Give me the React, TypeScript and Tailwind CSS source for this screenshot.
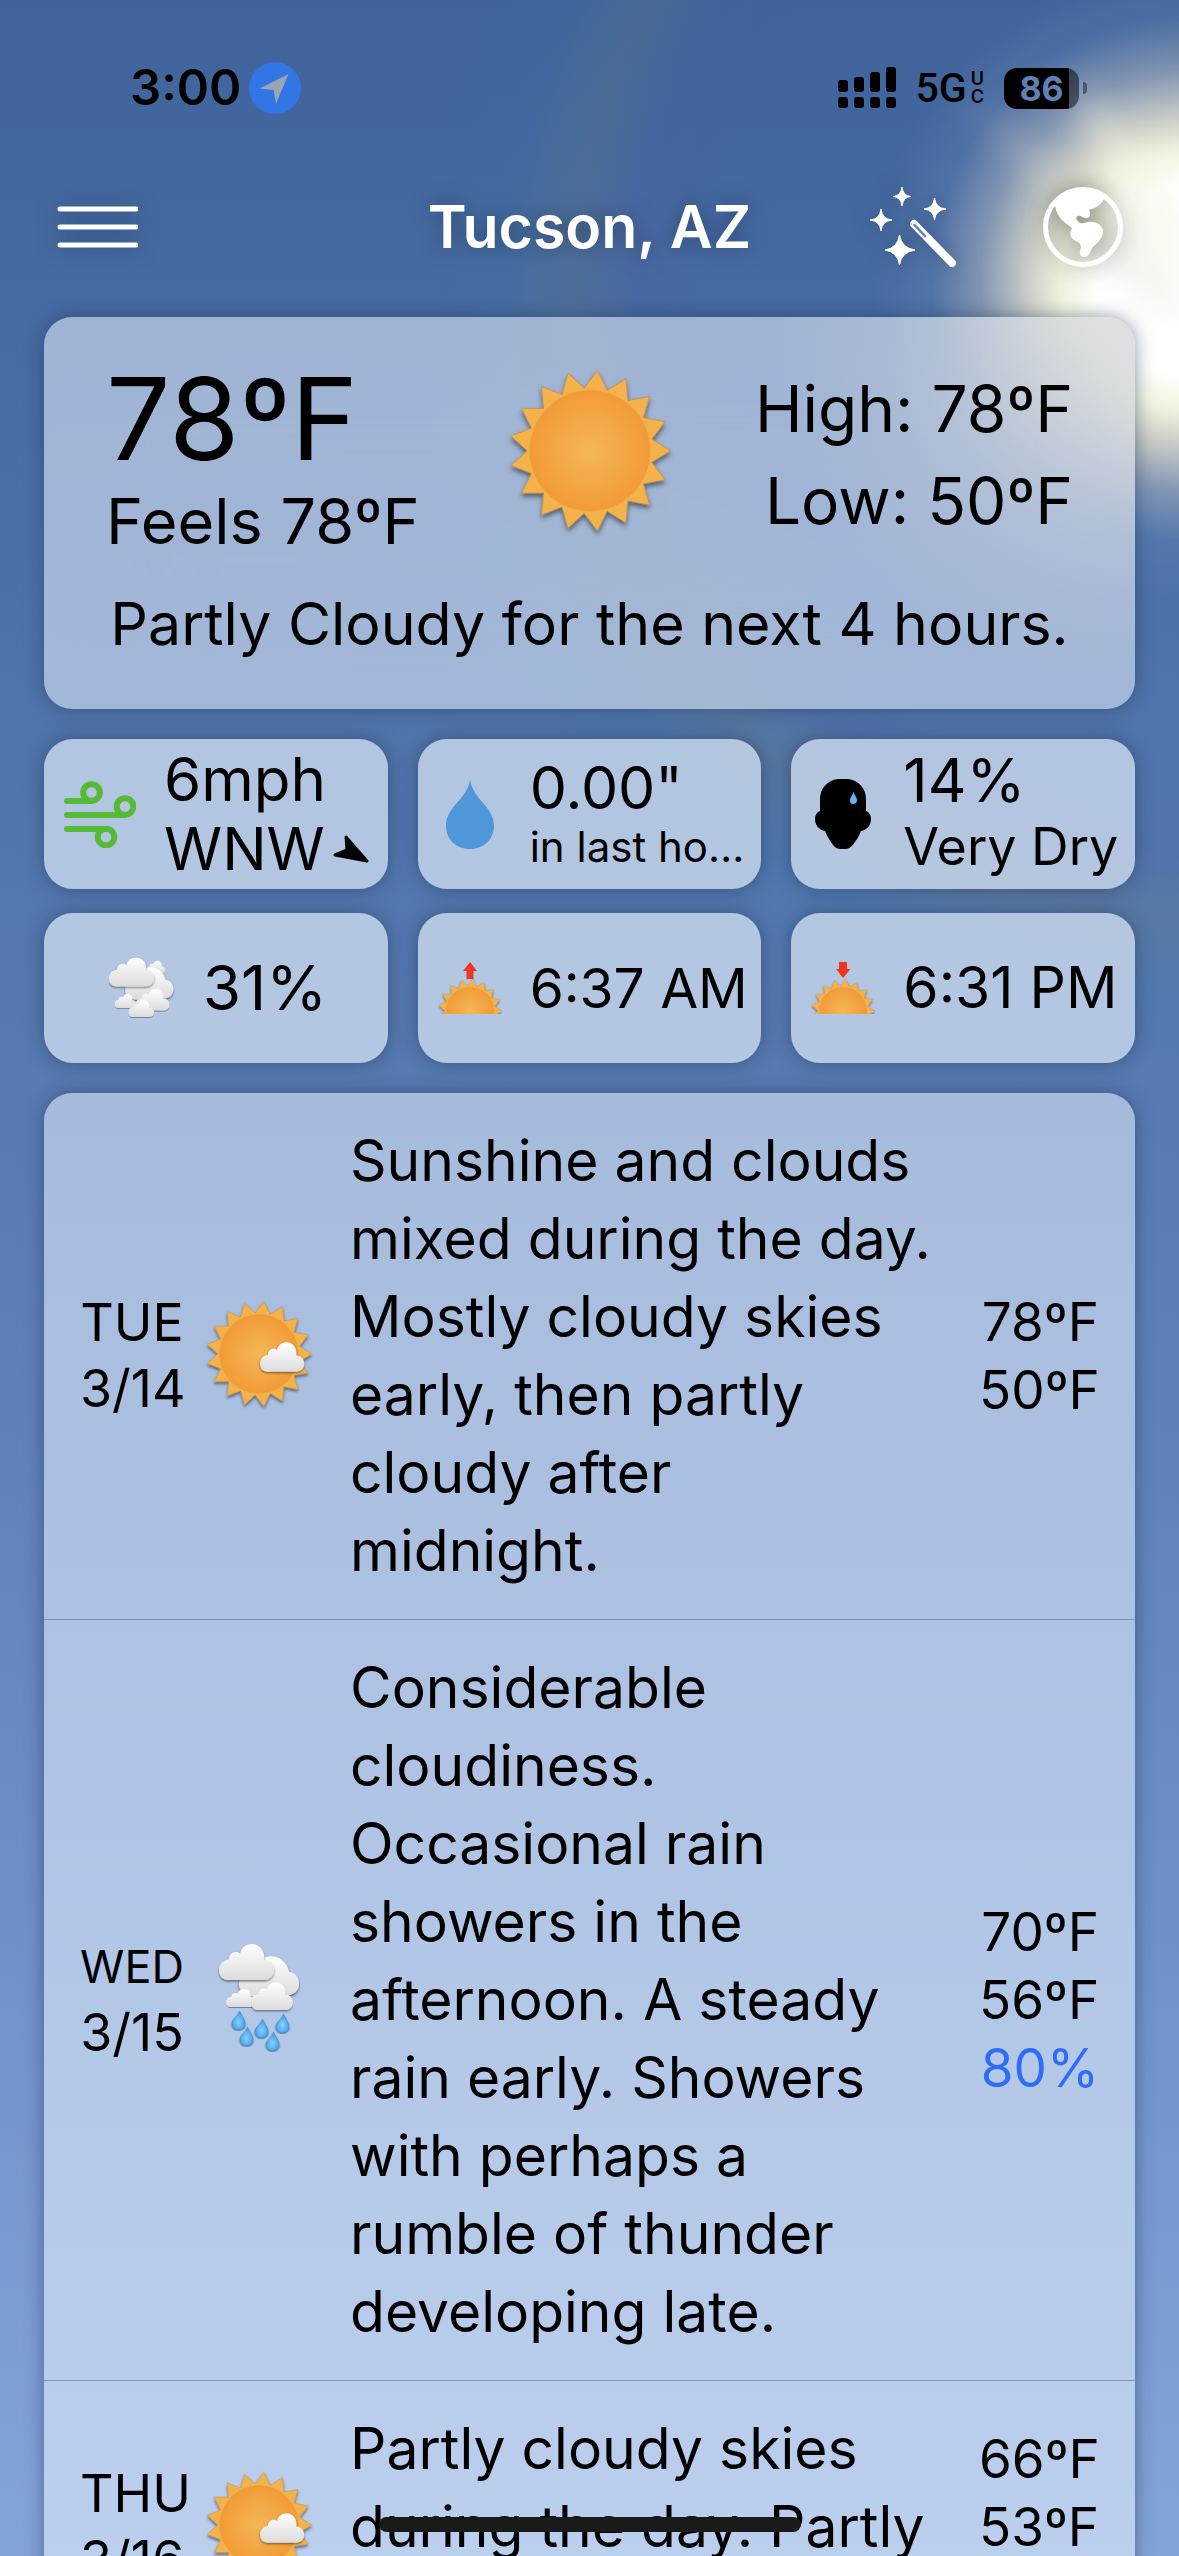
import type { ReactNode } from "react";

const RAYS = 17;

function starPoints(cx: number, cy: number, outer: number, inner: number) {
  return Array.from({ length: RAYS * 2 }, (_, i) => {
    const r = i % 2 === 0 ? outer : inner;
    const a = (Math.PI * i) / RAYS;
    return `${(cx + r * Math.cos(a)).toFixed(2)},${(cy + r * Math.sin(a)).toFixed(2)}`;
  }).join(" ");
}

const CLOUD =
  "M13 50C5 50 0 44 0 36.500C0 28 6 22 14 21.500C14 15 19 10.500 25 11C27 11 29 12 30.500 13C32 5 39 0 47 0C57 0 65 8 65 18C65 19.500 65 21 64.500 22.500C73 22 79 29 79 36.500C79 44 73 50 65 50Z";
const DROP = "M14 0C15 7 24 16 24 26C24 33 19 38 12 38C5 38 0 33 0 26C0 16 11 12 14 0Z";

function Defs() {
  return (
    <svg className="absolute w-0 h-0" aria-hidden="true">
      <defs>
        <radialGradient id="sunFill">
          <stop offset="0" stopColor="#f4b755" />
          <stop offset="1" stopColor="#f29b38" />
        </radialGradient>
        <linearGradient id="cloudFill" x1="0" y1="0" x2="0" y2="1">
          <stop offset="0" stopColor="#ffffff" />
          <stop offset="1" stopColor="#dcdcdd" />
        </linearGradient>
        <radialGradient id="dropFill" cx="0.5" cy="0.6">
          <stop offset="0" stopColor="#8fd0fb" />
          <stop offset="1" stopColor="#3fa4f0" />
        </radialGradient>
        <filter id="soft" x="-20%" y="-20%" width="140%" height="150%">
          <feDropShadow dx="0" dy="2" stdDeviation="1.5" floodOpacity="0.5" />
        </filter>
      </defs>
    </svg>
  );
}

function SunShape({ cloud = false }: { cloud?: boolean }) {
  return (
    <>
      <polygon points={starPoints(50, 50, 50, 39)} fill="#f3b24b" stroke="#b58a4a" strokeWidth="0.4" filter="url(#soft)" />
      <circle cx="50" cy="50" r="37.500" fill="url(#sunFill)" />
      {cloud && (
        <path d={CLOUD} transform="translate(51 39) scale(0.53 0.56)" fill="url(#cloudFill)" filter="url(#soft)" />
      )}
    </>
  );
}

function Sun({ className, cloud }: { className: string; cloud?: boolean }) {
  return (
    <svg viewBox="-2 -2 104 108" className={className} aria-hidden="true">
      <SunShape cloud={cloud} />
    </svg>
  );
}

function HalfSun({ down = false }: { down?: boolean }) {
  return (
    <svg viewBox="0 0 64 52" className="w-16 h-[52px] shrink-0" aria-hidden="true">
      <g transform="translate(0 17) scale(0.64)">
        <SunShape />
      </g>
      <path
        d={down ? "M28 0H36V7H39.500L32 16L25 7H28Z" : "M32 0L39 9H35.500V17H28.500V9H25Z"}
        fill="#ee3524"
      />
    </svg>
  );
}

function Cloud({ x, y, w, h }: { x: number; y: number; w: number; h: number }) {
  return (
    <g transform={`translate(${x} ${y}) scale(${w / 79} ${h / 50})`}>
      <path d={CLOUD} fill="url(#cloudFill)" filter="url(#soft)" />
    </g>
  );
}

function BigCloud() {
  return (
    <path
      d="M47 13C56 10 68 16 70 28C76 28 80 33 80 40C80 47 74 52 66 51C62 51 60 49 58 47L38 52C30 54 22 49 20 42C19 30 30 18 47 13Z"
      fill="url(#cloudFill)"
      filter="url(#soft)"
    />
  );
}

function CloudsIcon() {
  return (
    <svg viewBox="0 0 82 76" className="w-[66px] h-[62px] shrink-0" aria-hidden="true">
      <Cloud x={46} y={4} w={24} h={16} />
      <BigCloud />
      <Cloud x={7} y={45} w={27} h={18} />
      <Cloud x={33} y={39} w={42} h={27} />
      <Cloud x={0} y={0} w={56} h={36} />
      <Cloud x={24} y={53} w={32} h={21} />
    </svg>
  );
}

function RainIcon() {
  const drops = [
    [13, 67],
    [36, 75],
    [57, 70],
    [21, 83],
    [47, 88],
  ];
  return (
    <svg viewBox="-2 0 84 112" className="w-[84px] h-28" aria-hidden="true">
      <BigCloud />
      <Cloud x={7} y={45} w={30} h={18} />
      <Cloud x={32} y={38} w={42} h={28} />
      <Cloud x={0} y={0} w={55} h={36} />
      {drops.map(([x, y]) => (
        <g key={`${x}-${y}`} transform={`translate(${x} ${y}) scale(0.54 0.49)`}>
          <path d={DROP} fill="url(#dropFill)" stroke="#2f86c8" strokeWidth="1" filter="url(#soft)" />
        </g>
      ))}
    </svg>
  );
}

function WindIcon() {
  return (
    <svg viewBox="0 0 72 67" className="mx-5 w-[72px] h-[67px] shrink-0" fill="none" stroke="#55bb37" strokeWidth="6" strokeLinecap="round" aria-hidden="true">
      <path d="M3 20H27" />
      <path d="M3 34H61" />
      <path d="M3 48H42" />
      <circle cx="27.500" cy="11.500" r="8.300" />
      <circle cx="61" cy="25.500" r="8.300" />
      <circle cx="42" cy="56" r="8.300" />
    </svg>
  );
}

function RainDropIcon() {
  return (
    <svg viewBox="0 0 48 70" className="w-12 h-[70px] shrink-0" aria-hidden="true">
      <path d="M24 0C26 20 48 27 48 47C48 60 38 70 24 70C10 70 0 60 0 47C0 27 22 20 24 0Z" fill="#4f97d8" />
    </svg>
  );
}

function HumidityIcon() {
  return (
    <svg viewBox="0 0 56 70" className="w-14 h-[70px] shrink-0" aria-hidden="true">
      <path d="M23 0H33C44 1 51 10 51 20V32C54 33 56 36 56 40C56 46 52 51 46 52C44 58 40 63 37 67C34 70 31 70 28 70C24 70 21 70 18 66C15 62 12 57 10 52C4 51 0 46 0 40C0 36 2 33 5 32V20C5 10 12 1 23 0Z" />
      <path d="M38.500 12C39 16 42 18 42 21C42 24 40 25 38.500 25C36 25 35 24 35 21C35 18 38 16 38.500 12Z" fill="#62b5f5" />
    </svg>
  );
}

function Arrow() {
  return (
    <svg viewBox="0 0 36 28" className="w-9 h-7 shrink-0" aria-label="wind direction">
      <path d="M13 2L34 26L2 20L14 15Z" stroke="#000" strokeWidth="3" strokeLinejoin="round" />
    </svg>
  );
}

function Sky() {
  return (
    <>
      <div className="absolute inset-0 bg-[radial-gradient(circle_at_101%_300px,transparent_490px,rgba(90,90,165,0.13)_550px,rgba(105,125,130,0.26)_620px,rgba(60,125,165,0.14)_690px,transparent_760px)]" />
      <div className="absolute inset-0 bg-[radial-gradient(circle_at_101%_280px,#fff_0,#fff_95px,#f1f3df_130px,rgba(222,220,205,0.85)_165px,rgba(170,178,190,0.6)_210px,rgba(110,140,185,0.28)_260px,transparent_320px)]" />
      <svg viewBox="0 0 380 380" className="absolute top-0 right-0 w-[380px] h-[380px] blur-lg" aria-hidden="true">
        <path d="M380 330L270 70L380 210Z" fill="#f4f5e2" opacity="0.6" />
        <path d="M380 330L160 90L320 230Z" fill="#dcd8cc" opacity="0.6" />
      </svg>
    </>
  );
}

function StatusBar() {
  return (
    <div className="flex items-center justify-between h-[52px] pl-[86px] pr-12">
      <div className="flex items-center gap-2">
        <span className="text-[49px] leading-[52px] font-semibold">3:00</span>
        <svg viewBox="0 0 52 52" className="w-[52px] h-[52px]" aria-hidden="true">
          <circle cx="26" cy="26" r="26" fill="#3275e4" />
          <path d="M39.500 12L27 41.500L24.500 28L10.500 26.500Z" fill="#9aa5b4" />
        </svg>
      </div>
      <div className="flex items-center">
        <svg viewBox="0 0 58 42" className="w-[58px] h-[42px]" aria-hidden="true">
          <rect x="0" y="13" width="10" height="12" rx="3" />
          <rect x="16" y="10" width="10" height="15" rx="3" />
          <rect x="32" y="5" width="10" height="20" rx="3" />
          <rect x="48" y="0" width="10" height="25" rx="3" />
          <rect x="0" y="30" width="10" height="11" rx="3" />
          <rect x="16" y="30" width="10" height="11" rx="3" />
          <rect x="32" y="30" width="10" height="11" rx="3" />
          <rect x="48" y="30" width="10" height="11" rx="3" />
        </svg>
        <span className="ml-5 font-['Roboto'] text-[41px] leading-[42px] font-medium">5G</span>
        <span className="ml-1 flex flex-col text-[18px] leading-[18px] font-semibold">
          <span>U</span>
          <span>C</span>
        </span>
        <span className="ml-5 flex w-[75px] h-[41px] items-center justify-center overflow-hidden rounded-[13px] bg-linear-to-r from-black from-87% to-black/50 to-87% text-[34px] leading-[41px] font-bold text-[#6180b4]">
          86
        </span>
        <span className="ml-1 h-3 w-1 rounded-r-full bg-black/40" />
      </div>
    </div>
  );
}

function Header() {
  return (
    <header className="mt-[73px] flex h-20 items-center justify-between px-3 text-white">
      <button aria-label="Menu" className="w-60 drop-shadow-[0_0_10px_rgba(30,50,80,0.6)]">
        <svg viewBox="0 0 82 42" className="w-[82px] h-[42px]" stroke="currentColor" strokeWidth="5" strokeLinecap="round">
          <path d="M4 3H80M4 21H80M4 39H80" />
        </svg>
      </button>
      <h1 className="text-[59px] leading-[80px] font-semibold drop-shadow-[0_0_10px_rgba(30,50,80,0.6)]">Tucson, AZ</h1>
      <div className="flex w-60 items-center justify-end">
        <button aria-label="Effects" className="drop-shadow-[0_0_10px_rgba(30,50,80,0.5)]">
          <svg viewBox="0 0 87 81" className="w-[87px] h-[81px]" fill="currentColor">
            <path d="M32 0Q33 9 41 9.500Q33 10 32 19Q31 10 23 9.500Q31 9 32 0Z" stroke="currentColor" />
            <path d="M64.500 11Q65.500 21 76 22Q65.500 23 64.500 33Q63.500 23 54 22Q63.500 21 64.500 11Z" stroke="currentColor" />
            <path d="M11 22Q12 32 22 33Q12 34 11 44Q10 34 0 33Q10 32 11 22Z" stroke="currentColor" />
            <path d="M29.500 48Q31.500 61 45 63Q31.500 65 29.500 78Q27.500 65 15 63Q27.500 61 29.500 48Z" stroke="currentColor" />
            <path d="M44 37L82 76" stroke="currentColor" strokeWidth="8" strokeLinecap="round" />
            <path d="M44.500 38L55 49" stroke="#6483b2" strokeWidth="2.500" strokeLinecap="round" />
          </svg>
        </button>
        <button aria-label="Map" className="ml-[86px] drop-shadow-[0_0_12px_rgba(50,50,30,0.55)]">
          <svg viewBox="0 0 80 80" className="w-20 h-20" fill="currentColor">
            <circle cx="40" cy="40" r="37.500" fill="none" stroke="currentColor" strokeWidth="5" />
            <path d="M12 18C22 4 42 0 58 8L61 12C57 19 52 21 46 23C49 28 46 32 42 31C39 31 38 28 35 29C32 30 33 33 37 36C42 37 44 34 50 35C56 36 61 40 60 46C58 54 53 57 49 61C47 65 46 70 41 70C36 69 36 66 38 61C38 56 36 56 31 53C27 50 26 46 29 41C24 37 13 31 12 18Z" />
          </svg>
        </button>
      </div>
    </header>
  );
}

function Tile({ icon, children, center = false }: { icon: ReactNode; children: ReactNode; center?: boolean }) {
  return (
    <div className="flex h-[150px] items-center overflow-hidden rounded-[29px] bg-[#ebf4ff]/64 shadow-[0_0_18px_rgba(30,50,80,0.5)]">
      {center ? (
        <div className="flex w-full items-center justify-center gap-7 pl-1">
          {icon}
          {children}
        </div>
      ) : (
        <>
          <div className="flex min-w-[104px] shrink-0 justify-center">{icon}</div>
          <div className="ml-2 min-w-0 flex-1 pr-2">{children}</div>
        </>
      )}
    </div>
  );
}

const forecast = [
  {
    day: "TUE",
    date: "3/14",
    icon: <Sun cloud className="w-[110px] h-[114px]" />,
    text: "Sunshine and clouds mixed during the day. Mostly cloudy skies early, then partly cloudy after midnight.",
    temps: ["78ºF", "50ºF"],
  },
  {
    day: "WED",
    date: "3/15",
    icon: <RainIcon />,
    text: "Considerable cloudiness. Occasional rain showers in the afternoon. A steady rain early. Showers with perhaps a rumble of thunder developing late.",
    temps: ["70ºF", "56ºF"],
    rain: "80%",
  },
  {
    day: "THU",
    date: "3/16",
    icon: <Sun cloud className="w-[110px] h-[114px]" />,
    text: "Partly cloudy skies during the day. Partly",
    temps: ["66ºF", "53ºF"],
    rain: "",
  },
];

export default function App() {
  return (
    <div className="relative h-screen overflow-hidden bg-[linear-gradient(180deg,#3f639a_0%,#466aa2_12%,#4f74ab_28%,#567ab1_42%,#6485bf_62%,#84a4d9_100%)] font-['Inter',sans-serif] text-black">
      <Defs />
      <Sky />
      <div className="relative px-11 pt-[62px]">
        <StatusBar />
        <Header />

        <section className="mt-[50px] rounded-[28px] bg-[#eaf1fe]/55 bg-[radial-gradient(circle_at_100%_0,rgba(212,214,208,0.65),rgba(200,205,210,0.3)_200px,transparent_360px)] px-[62px] pt-[46px] pb-[45px] shadow-[0_0_18px_rgba(30,50,80,0.5)] backdrop-blur-3xl">
          <div className="flex items-start justify-between">
            <div className="w-[340px]">
              <p className="text-[114px] leading-[112px]">78ºF</p>
              <p className="text-[63px] leading-[92px] whitespace-nowrap">Feels 78ºF</p>
            </div>
            <Sun className="mt-1 w-[168px] h-[174px]" />
            <div className="w-[340px] text-right text-[64px] leading-[92px] whitespace-nowrap">
              <p>High: 78ºF</p>
              <p>Low: 50ºF</p>
            </div>
          </div>
          <p className="mt-[17px] text-center text-[59px] leading-[80px]">
            Partly Cloudy for the next 4 hours.
          </p>
        </section>

        <section className="mt-[30px] grid grid-cols-3 gap-x-[30px] gap-y-6">
          <Tile icon={<WindIcon />}>
            <p className="text-[60px] leading-[70px]">6mph</p>
            <p className="flex items-center gap-2 text-[59px] leading-[70px]">
              WNW <Arrow />
            </p>
          </Tile>
          <Tile icon={<RainDropIcon />}>
            <p className="text-[59px] leading-[66px]">0.00"</p>
            <p className="text-[42px] leading-[52px] whitespace-nowrap">in last ho…</p>
          </Tile>
          <Tile icon={<HumidityIcon />}>
            <p className="text-[60px] leading-[66px]">14%</p>
            <p className="text-[52px] leading-[68px] whitespace-nowrap">Very Dry</p>
          </Tile>
          <Tile center icon={<CloudsIcon />}>
            <p className="text-[62px] leading-[70px]">31%</p>
          </Tile>
          <Tile icon={<HalfSun />}>
            <p className="text-[55px] leading-[70px] whitespace-nowrap">6:37 AM</p>
          </Tile>
          <Tile icon={<HalfSun down />}>
            <p className="text-[57px] leading-[70px] whitespace-nowrap">6:31 PM</p>
          </Tile>
        </section>

        <section className="mt-[30px] rounded-[28px] bg-[#eaf3ff]/55 shadow-[0_0_18px_rgba(30,50,80,0.5)]">
          {forecast.map((f) => (
            <article key={f.day} className="flex items-center border-b border-[#8495b3] py-[29px] pr-9 pl-9">
              <div className="w-[104px] text-center leading-[66px] whitespace-nowrap">
                <p className={f.day === "WED" ? "text-[45px]" : "text-[52px]"}>{f.day}</p>
                <p className="text-[52px]">{f.date}</p>
              </div>
              <div className="ml-[18px] flex w-[114px] justify-center">{f.icon}</div>
              <p className="mr-[46px] ml-[34px] min-h-[234px] flex-1 text-[57px] leading-[78px]">{f.text}</p>
              <div className="w-[120px] text-right text-[53px] leading-[68px] whitespace-nowrap">
                <p>{f.temps[0]}</p>
                <p>{f.temps[1]}</p>
                {f.rain !== undefined && <p className="h-[68px] text-[#2f6df6]">{f.rain}</p>}
              </div>
            </article>
          ))}
        </section>
      </div>
      <div className="absolute bottom-6 left-1/2 h-[15px] w-[422px] -translate-x-1/2 rounded-full bg-[#1a1a1a]" />
    </div>
  );
}
